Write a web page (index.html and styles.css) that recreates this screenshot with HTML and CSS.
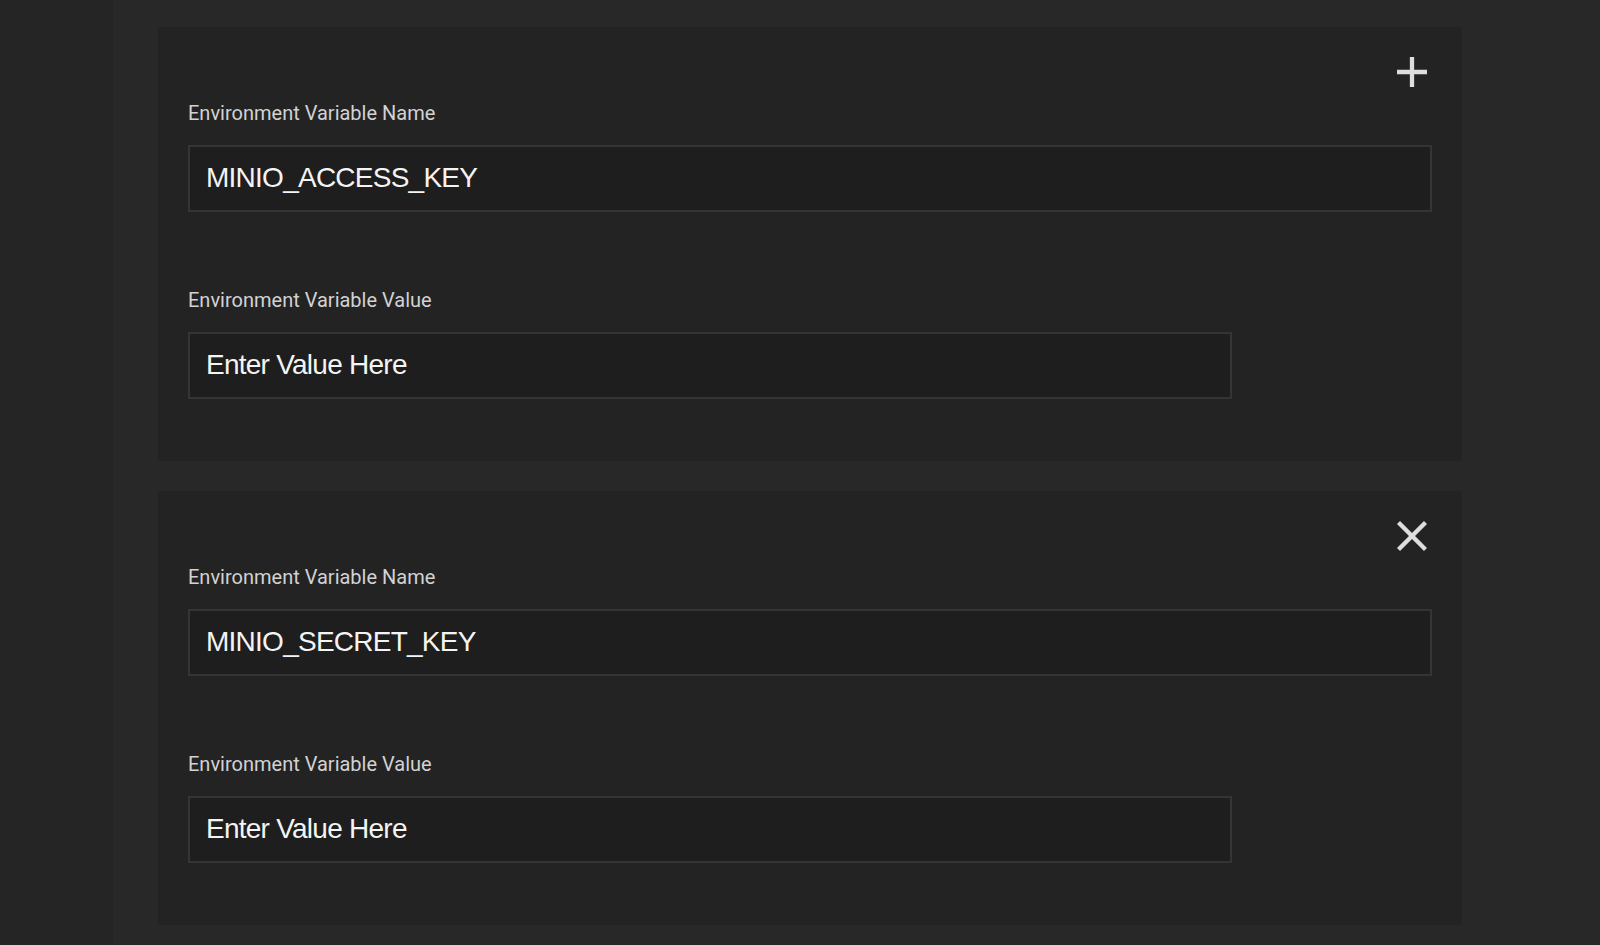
FILE: index.html
```html
<!DOCTYPE html>
<html lang="en">
<head>
<meta charset="utf-8">
<title>Environment Variables</title>
<link rel="stylesheet" href="styles.css">
</head>
<body>
<div class="layout">
  <aside class="sidebar"></aside>
  <main class="main">
    <section class="card">
      <div class="card-head">
        <button class="icon-btn" aria-label="Add">
          <svg viewBox="5 5 14 14" width="30" height="30"><path d="M19 13h-6v6h-2v-6H5v-2h6V5h2v6h6v2z"/></svg>
        </button>
      </div>
      <label class="field">
        <span class="label">Environment Variable Name</span>
        <input class="input input-wide" type="text" value="MINIO_ACCESS_KEY">
      </label>
      <label class="field field-value">
        <span class="label">Environment Variable Value</span>
        <input class="input input-narrow" type="text" placeholder="Enter Value Here">
      </label>
    </section>
    <section class="card">
      <div class="card-head">
        <button class="icon-btn" aria-label="Remove">
          <svg viewBox="5 5 14 14" width="30" height="30"><path d="M19 6.41L17.59 5 12 10.59 6.41 5 5 6.41 10.59 12 5 17.59 6.41 19 12 13.41 17.59 19 19 17.59 13.41 12z"/></svg>
        </button>
      </div>
      <label class="field">
        <span class="label">Environment Variable Name</span>
        <input class="input input-wide" type="text" value="MINIO_SECRET_KEY">
      </label>
      <label class="field field-value">
        <span class="label">Environment Variable Value</span>
        <input class="input input-narrow" type="text" placeholder="Enter Value Here">
      </label>
    </section>
  </main>
</div>
</body>
</html>
```
FILE: styles.css
```css
html, body {
  margin: 0;
  padding: 0;
  height: 100%;
  background: #282828;
}
body {
  font-family: Roboto, "Liberation Sans", sans-serif;
  overflow: hidden;
}
.layout {
  display: flex;
  min-height: 945px;
}
.sidebar {
  width: 113px;
  flex: 0 0 113px;
  background: #252525;
}
.main {
  flex: 1;
  display: flex;
  flex-direction: column;
  gap: 30px;
  padding: 27px 0 0 45px;
}
.card {
  width: 1304px;
  box-sizing: border-box;
  background: #232323;
  padding: 30px 30px 62px 30px;
  display: flex;
  flex-direction: column;
}
.card-head {
  display: flex;
  justify-content: flex-end;
  height: 30px;
  margin-bottom: 14px;
}
.icon-btn {
  width: 30px;
  height: 30px;
  margin: 0 5px 0 0;
  padding: 0;
  border: 0;
  background: transparent;
  display: flex;
  cursor: pointer;
}
.icon-btn svg {
  display: block;
  fill: #dedede;
}
.field {
  display: flex;
  flex-direction: column;
  gap: 20px;
}
.field-value {
  margin-top: 76px;
}
.label {
  font-size: 20px;
  line-height: 24px;
  color: #d2d2d2;
}
.input {
  box-sizing: border-box;
  height: 67px;
  border: 2px solid #353535;
  background: #1e1e1e;
  color: #f4f4f4;
  font-family: "Liberation Sans", Arial, sans-serif;
  font-size: 28px;
  letter-spacing: -0.75px;
  padding: 0 16px 2px 16px;
  outline: none;
  border-radius: 0;
}
.input::placeholder {
  color: #f4f4f4;
  opacity: 1;
}
.input-wide {
  width: 1244px;
}
.input-narrow {
  width: 1044px;
}
```
